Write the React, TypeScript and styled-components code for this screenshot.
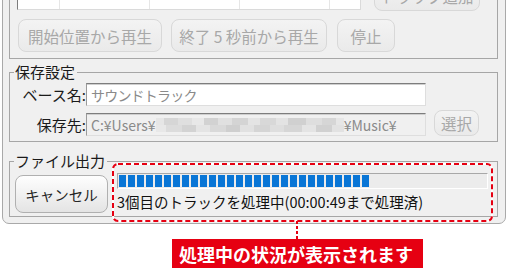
import React from "react";
import styled, {createGlobalStyle} from "styled-components";


const GlobalStyle = createGlobalStyle`
    html, body {
        margin: 0;
        padding: 0;
        background: #fff;
        overflow: hidden;
    }
    body {
        font-family: "Noto Sans CJK JP", "Noto Sans", sans-serif;
        color: #1a1a1a;
    }
`;

const Window = styled.div`
    box-sizing: border-box;
    width: 504px;
    margin: -40px 0 0 2px;
    padding: 4px 7px 6px 6px;
    background: #f0f0f0;
    border: 1px solid #a9a9a9;
    border-radius: 0 0 7px 7px;
    display: flex;
    flex-direction: column;
`;

const Group = styled.fieldset<{ $pad: string; $mt: number }>`
    box-sizing: border-box;
    min-width: 0;
    width: 489px;
    margin: ${p => p.$mt}px 0 0 0;
    padding: ${p => p.$pad};
    border: 1px solid #a6a6a6;
    display: flex;
    flex-direction: column;
`;

const Legend = styled.legend`
    padding: 0 2px 0 1px;
    margin-left: -1px;
    font-size: 15px;
    line-height: 18px;
    color: #1a1a1a;
`;

const TopRow = styled.div`
    display: flex;
    align-items: flex-start;
    gap: 13px;
`;

const TrackList = styled.div`
    box-sizing: border-box;
    width: 344px;
    height: 38px;
    display: grid;
    grid-template-columns: 42px 90px 90px 90px 1fr;
    background: #fff;
    border-left: 1px solid #7c7c7c;
    border-right: 1px solid #dadada;
    border-bottom: 1px solid #dadada;
`;

const ListCell = styled.div`
    border-right: 1px solid #e6e6e6;
    &:last-child {
        border-right: none;
    }
`;

const Button = styled.button<{ $w: number; $h: number }>`
    box-sizing: border-box;
    width: ${p => p.$w}px;
    height: ${p => p.$h}px;
    padding: 0;
    border: 1px solid ${p => (p.disabled ? "#d8d8d8" : "#b0b0b0")};
    border-radius: 8px;
    background: ${p => (p.disabled
        ? "linear-gradient(#f3f3f3, #eaeaea)"
        : "linear-gradient(#fefefe, #e4e4e4)")};
    color: ${p => (p.disabled ? "#a8a8a8" : "#262626")};
    font-family: inherit;
    font-size: ${p => (p.disabled ? "15.5px" : "14.5px")};
    white-space: nowrap;
    flex-shrink: 0;
`;

const TrackAddButton = styled(Button)`
    margin-top: 9px;
`;

const ButtonRow = styled.div`
    display: flex;
    margin: 8px 0 0 1px;
    gap: 9px;

    & > :last-child {
        margin-left: 1px;
    }
`;

const Fields = styled.div`
    display: flex;
    flex-direction: column;
    gap: 4px;
    padding-top: 2px;
`;

const FieldRow = styled.div`
    display: flex;
    align-items: flex-end;
`;

const FieldLabel = styled.label`
    width: 71px;
    text-align: right;
    font-size: 15px;
    line-height: 23px;
    white-space: nowrap;
`;

const TextBox = styled.div<{ $disabled?: boolean }>`
    box-sizing: border-box;
    width: 340px;
    height: 23px;
    padding: 0 4px;
    display: flex;
    align-items: center;
    background: ${p => (p.$disabled ? "#f0f0f0" : "#fff")};
    border-top: 1px solid #7d7d7d;
    border-left: 1px solid #9a9a9a;
    border-right: 1px solid #dedede;
    border-bottom: 1px solid #dedede;
    box-shadow: inset 0 1px 0 #cfcfcf;
    color: #8a8a8a;
    font-size: 14px;
    letter-spacing: ${p => (p.$disabled ? "0" : "-0.8px")};
    white-space: nowrap;
    overflow: hidden;
`;

const Mosaic = styled.span`
    display: inline-block;
    width: 188px;
    height: 14px;
    flex-shrink: 0;
    background:
        linear-gradient(90deg,
            #e6e6e6 0 8px, #d6d6d6 8px 22px, #dfdfdf 22px 36px, #e8e8e8 36px 48px,
            #d2d2d2 48px 62px, #e0e0e0 62px 76px, #d4d4d4 76px 92px, #e4e4e4 92px 104px,
            #d8d8d8 104px 120px, #e3e3e3 120px 132px, #d0d0d0 132px 150px, #dedede 150px 166px,
            #d6d6d6 166px 180px, #e6e6e6 180px 188px) top / 100% 7px no-repeat,
        linear-gradient(90deg,
            #e8e8e8 0 10px, #dcdcdc 10px 26px, #d3d3d3 26px 40px, #e4e4e4 40px 54px,
            #d9d9d9 54px 70px, #cfcfcf 70px 84px, #e1e1e1 84px 98px, #d5d5d5 98px 114px,
            #dedede 114px 128px, #d6d6d6 128px 146px, #e4e4e4 146px 160px, #d1d1d1 160px 176px,
            #e2e2e2 176px 188px) bottom / 100% 7px no-repeat;
`;

const SelectButton = styled(Button)`
    margin-left: 8px;
`;

const OutputRow = styled.div`
    display: flex;
    align-items: flex-start;
    gap: 9px;
    padding-top: 3px;
`;

const CancelButton = styled(Button)`
    margin-top: 2px;
`;

const ProgressArea = styled.div`
    position: relative;
    width: 371px;
    display: flex;
    flex-direction: column;
`;

const ProgressBar = styled.div`
    box-sizing: border-box;
    height: 16px;
    padding: 1px;
    display: flex;
    gap: 2px;
    background: #ececec;
    border-top: 1px solid #a8a8a8;
    border-left: 1px solid #a8a8a8;
    border-right: 1px solid #fff;
    border-bottom: 1px solid #fff;
`;

const Block = styled.span`
    width: 7px;
    height: 12px;
    background: #0a76d6;
`;

const StatusText = styled.div`
    margin-top: 3px;
    font-size: 14.5px;
    line-height: 20px;
    color: #111;
    white-space: nowrap;
`;

const Highlight = styled.svg`
    position: absolute;
    left: -5px;
    top: -10px;
    width: 381px;
    height: 59px;
    overflow: visible;
    pointer-events: none;
`;

const Annotation = styled.div`
    width: 251px;
    margin-left: 172px;
    display: flex;
    flex-direction: column;
`;

const Connector = styled.div`
    position: relative;
    width: 2px;
    height: 18px;
    margin: -3px 0 0 124px;
    background: repeating-linear-gradient(to bottom, #e60012 0 3px, transparent 3px 5px);
`;

const Callout = styled.div`
    height: 30px;
    display: flex;
    align-items: center;
    justify-content: center;
    padding-right: 3px;
    background: #e60012;
    color: #fff;
    font-size: 18px;
    font-weight: 700;
    white-space: nowrap;
`;


const PROGRESS_BLOCKS = 28;

export default function App() {
    const blocks = Array.from({length: PROGRESS_BLOCKS}, (_, i) => <Block key={i}/>);

    return (
        <>
            <GlobalStyle/>
            <Window>
                <Group $pad="6px 7px 6px 7px" $mt={0}>
                    <TopRow>
                        <TrackList>
                            <ListCell/><ListCell/><ListCell/><ListCell/><ListCell/>
                        </TrackList>
                        <TrackAddButton $w={106} $h={30} disabled>トラック追加</TrackAddButton>
                    </TopRow>
                    <ButtonRow>
                        <Button $w={144} $h={33} disabled>開始位置から再生</Button>
                        <Button $w={156} $h={33} disabled>終了 5 秒前から再生</Button>
                        <Button $w={58} $h={33} disabled>停止</Button>
                    </ButtonRow>
                </Group>

                <Group $pad="0 9px 5px 5px" $mt={4}>
                    <Legend>保存設定</Legend>
                    <Fields>
                        <FieldRow>
                            <FieldLabel>ベース名:</FieldLabel>
                            <TextBox>サウンドトラック</TextBox>
                        </FieldRow>
                        <FieldRow>
                            <FieldLabel>保存先:</FieldLabel>
                            <TextBox $disabled>
                                C:¥Users¥<Mosaic/>¥Music¥
                            </TextBox>
                            <SelectButton $w={45} $h={26} disabled>選択</SelectButton>
                        </FieldRow>
                    </Fields>
                </Group>

                <Group $pad="0 9px 3px 5px" $mt={10}>
                    <Legend>ファイル出力</Legend>
                    <OutputRow>
                        <CancelButton $w={93} $h={38}>キャンセル</CancelButton>
                        <ProgressArea>
                            <ProgressBar>{blocks}</ProgressBar>
                            <StatusText>3個目のトラックを処理中(00:00:49まで処理済)</StatusText>
                            <Highlight>
                                <rect x="1" y="1" width="379" height="57" rx="5" fill="none"
                                      stroke="#fff" strokeWidth="2"/>
                                <rect x="1" y="1" width="379" height="57" rx="5" fill="none"
                                      stroke="#e60012" strokeWidth="2" strokeDasharray="5 3"/>
                            </Highlight>
                        </ProgressArea>
                    </OutputRow>
                </Group>
            </Window>

            <Annotation>
                <Connector/>
                <Callout>処理中の状況が表示されます</Callout>
            </Annotation>
        </>
    );
}
